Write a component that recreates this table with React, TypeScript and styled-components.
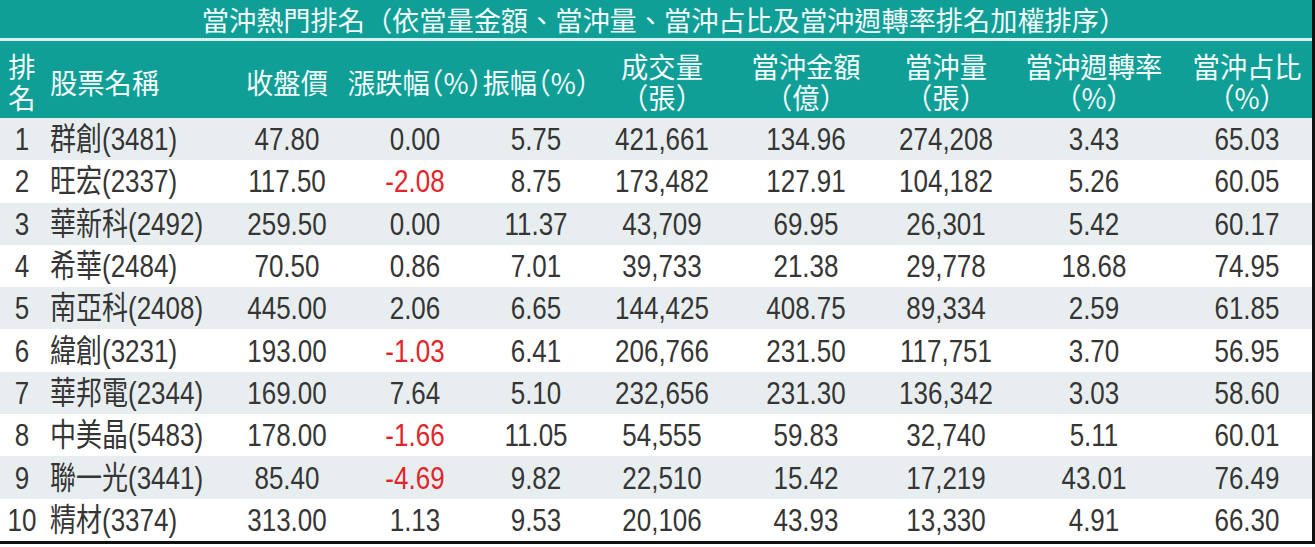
import React from "react";
import styled, { createGlobalStyle } from "styled-components";

const Global = createGlobalStyle`
  html, body { margin: 0; padding: 0; background: #ffffff; }
  body { font-family: "Liberation Sans", "Noto Sans CJK TC", sans-serif; }
`;

const COLS = "44px 174px 138px 118px 124px 128px 160px 120px 176px 130px";
const TEAL = "#0f9f97";

const Frame = styled.div`
  width: 1312px;
  border-right: 3px solid #111;
  border-bottom: 3px solid #111;
  background: #fff;
`;

const Title = styled.div`
  height: 38px;
  background: ${TEAL};
  color: #f2fbfa;
  display: flex;
  align-items: center;
  justify-content: center;
  font-family: "Noto Sans CJK TC", sans-serif;
  font-size: 27.2px;
  line-height: 38px;
  border-bottom: 3px solid #d8f1ee;
  white-space: nowrap;
  padding-left: 16px;
`;

const HeadRow = styled.div`
  height: 77px;
  box-sizing: border-box;
  padding-top: 3px;
  background: ${TEAL};
  color: #f4fbfa;
  display: grid;
  grid-template-columns: ${COLS};
`;

const HeadCell = styled.div<{ $align?: "left" | "center" }>`
  display: flex;
  flex-direction: column;
  align-items: ${(p) => (p.$align === "left" ? "flex-start" : "center")};
  justify-content: center;
  padding-left: ${(p) => (p.$align === "left" ? "6px" : "0")};
  white-space: nowrap;
`;

const HeadLine = styled.span<{ $align?: "left" | "center" }>`
  display: block;
  height: 31px;
  font-family: "Noto Sans CJK TC", sans-serif;
  font-size: 27.3px;
  line-height: 31px;
  font-feature-settings: "halt";
  transform: scaleY(1.06);
  transform-origin: ${(p) => (p.$align === "left" ? "left center" : "center")};
`;

const Row = styled.div<{ $alt: boolean }>`
  height: 42.3px;
  display: grid;
  grid-template-columns: ${COLS};
  background: ${(p) => (p.$alt ? "#e8eef0" : "#ffffff")};
  color: #353535;
`;

const Cell = styled.div<{ $align?: "left" | "center"; $red?: boolean }>`
  display: flex;
  align-items: center;
  justify-content: ${(p) => (p.$align === "left" ? "flex-start" : "center")};
  padding-left: ${(p) => (p.$align === "left" ? "6px" : "0")};
  white-space: nowrap;
  color: ${(p) => (p.$red ? "#e2242b" : "inherit")};
`;

const CellText = styled.span<{ $align?: "left" | "center" }>`
  display: inline-block;
  font-family: "Liberation Sans", "Noto Sans CJK TC", sans-serif;
  font-size: 26px;
  line-height: 1;
  transform: scaleY(1.22);
  transform-origin: ${(p) => (p.$align === "left" ? "left center" : "center")};
`;

type R = [string, string, string, string, string, string, string, string, string];

const rows: R[] = [
  ["群創(3481)", "47.80", "0.00", "5.75", "421,661", "134.96", "274,208", "3.43", "65.03"],
  ["旺宏(2337)", "117.50", "-2.08", "8.75", "173,482", "127.91", "104,182", "5.26", "60.05"],
  ["華新科(2492)", "259.50", "0.00", "11.37", "43,709", "69.95", "26,301", "5.42", "60.17"],
  ["希華(2484)", "70.50", "0.86", "7.01", "39,733", "21.38", "29,778", "18.68", "74.95"],
  ["南亞科(2408)", "445.00", "2.06", "6.65", "144,425", "408.75", "89,334", "2.59", "61.85"],
  ["緯創(3231)", "193.00", "-1.03", "6.41", "206,766", "231.50", "117,751", "3.70", "56.95"],
  ["華邦電(2344)", "169.00", "7.64", "5.10", "232,656", "231.30", "136,342", "3.03", "58.60"],
  ["中美晶(5483)", "178.00", "-1.66", "11.05", "54,555", "59.83", "32,740", "5.11", "60.01"],
  ["聯一光(3441)", "85.40", "-4.69", "9.82", "22,510", "15.42", "17,219", "43.01", "76.49"],
  ["精材(3374)", "313.00", "1.13", "9.53", "20,106", "43.93", "13,330", "4.91", "66.30"],
];

const headers: { lines: string[]; align?: "left" | "center" }[] = [
  { lines: ["排", "名"] },
  { lines: ["股票名稱"], align: "left" },
  { lines: ["收盤價"] },
  { lines: ["漲跌幅（%）"] },
  { lines: ["振幅（%）"] },
  { lines: ["成交量", "（張）"] },
  { lines: ["當沖金額", "（億）"] },
  { lines: ["當沖量", "（張）"] },
  { lines: ["當沖週轉率", "（%）"] },
  { lines: ["當沖占比", "（%）"] },
];

export default function App() {
  return (
    <>
      <Global />
      <Frame>
        <Title>當沖熱門排名（依當量金額、當沖量、當沖占比及當沖週轉率排名加權排序）</Title>
        <HeadRow>
          {headers.map((h, i) => (
            <HeadCell key={i} $align={h.align}>
              {h.lines.map((l, j) => (
                <HeadLine key={j} $align={h.align}>
                  {l}
                </HeadLine>
              ))}
            </HeadCell>
          ))}
        </HeadRow>
        {rows.map((r, i) => (
          <Row key={i} $alt={i % 2 === 0}>
            <Cell>
              <CellText>{i + 1}</CellText>
            </Cell>
            <Cell $align="left">
              <CellText $align="left">{r[0]}</CellText>
            </Cell>
            {r.slice(1).map((v, j) => (
              <Cell key={j} $red={j === 1 && v.startsWith("-")}>
                <CellText>{v}</CellText>
              </Cell>
            ))}
          </Row>
        ))}
      </Frame>
    </>
  );
}
